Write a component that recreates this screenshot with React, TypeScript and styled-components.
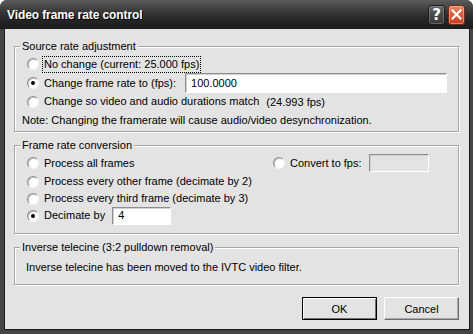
import React from "react";
import styled, { createGlobalStyle } from "styled-components";

const Global = createGlobalStyle`
  html, body { margin: 0; padding: 0; background: #ffffff; }
  body { font-family: "Liberation Sans", Arial, sans-serif; font-size: 11px; color: #000; }
  * { box-sizing: border-box; }
`;

const Window = styled.div`
  width: 473px;
  height: 334px;
  display: flex;
  flex-direction: column;
  background: #3a3a3a;
  border-radius: 7px 7px 0 0;
  overflow: hidden;
`;

const TitleBar = styled.div`
  height: 29px;
  flex: none;
  display: flex;
  align-items: center;
  padding: 0 8px 0 7px;
  background: linear-gradient(#5c5c5c 0%, #3c3c3c 35%, #242424 70%, #1c1c1c 100%);
`;

const Title = styled.div`
  flex: 1;
  color: #ffffff;
  font-family: "Liberation Sans", Arial, sans-serif;
  font-weight: bold;
  font-size: 12px;
  letter-spacing: -0.1px;
  text-shadow: 1px 1px 0 #000;
  padding-top: 1px;
`;

const CapButton = styled.div<{ $close?: boolean }>`
  width: 17px;
  height: 20px;
  margin-left: ${(p) => (p.$close ? "3px" : "0")};
  border-radius: 3px;
  border: 1px solid ${(p) => (p.$close ? "#7a2a18" : "#202020")};
  background: ${(p) =>
    p.$close
      ? "linear-gradient(#f08a66 0%, #e05a36 45%, #c8401e 100%)"
      : "linear-gradient(#6a6a6a 0%, #4a4a4a 50%, #383838 100%)"};
  box-shadow: inset 0 0 0 1px ${(p) => (p.$close ? "rgba(255,190,160,0.5)" : "rgba(160,160,160,0.4)")};
  display: flex;
  align-items: center;
  justify-content: center;
  color: #fff;
  font-family: "DejaVu Sans", Verdana, sans-serif;
  font-weight: bold;
  font-size: 15px;
`;

const Frame = styled.div`
  flex: 1;
  display: flex;
  padding: 0 3px 4px 4px;
  background: #454545;
`;

const Body = styled.div`
  flex: 1;
  background: #e3e3e3;
  border-left: 1px solid #1a1a1a;
  border-bottom: 1px solid #1a1a1a;
  border-right: 1px solid #1a1a1a;
  display: flex;
  flex-direction: column;
  padding: 11px 10px 0 9px;
`;

const Group = styled.fieldset<{ $gap?: number; $pb?: number; $pt?: number }>`
  margin: ${(p) => p.$gap ?? 0}px 0 0 0;
  padding: ${(p) => p.$pt ?? 2}px 11px ${(p) => p.$pb ?? 0}px 5px;
  border: 1px solid #a6a6a6;
  box-shadow: inset 1px 1px 0 #ffffff, 1px 1px 0 #ffffff;
  min-width: 0;
`;

const Legend = styled.legend`
  padding: 0 2px;
  line-height: 13px;
  height: 13px;
  background: #e3e3e3;
`;

const Row = styled.div<{ $h: number; $indent?: number }>`
  height: ${(p) => p.$h}px;
  display: flex;
  align-items: center;
  padding-left: ${(p) => p.$indent ?? 7}px;
  white-space: nowrap;
`;

const RadioCircle = styled.span<{ $on?: boolean }>`
  width: 12px;
  height: 12px;
  flex: none;
  border-radius: 50%;
  background: #ffffff;
  border: 1px solid;
  border-color: #8c8c8c #f4f4f4 #f4f4f4 #8c8c8c;
  box-shadow: inset 1px 1px 0 #c6c6c6;
  display: flex;
  align-items: center;
  justify-content: center;
  margin-right: 4px;
  &::after {
    content: "";
    width: 4px;
    height: 4px;
    border-radius: 50%;
    background: ${(p) => (p.$on ? "#000" : "transparent")};
  }
`;

const Label = styled.span<{ $focus?: boolean }>`
  padding: 1px 1px;
  line-height: 13px;
  outline: ${(p) => (p.$focus ? "1px dotted #000" : "none")};
`;

const TextBox = styled.div<{ $w?: number; $h: number; $disabled?: boolean; $grow?: boolean }>`
  ${(p) => (p.$grow ? "flex: 1;" : `width: ${p.$w}px;`)}
  height: ${(p) => p.$h}px;
  margin-left: ${(p) => (p.$grow ? 8 : 6)}px;
  background: ${(p) => (p.$disabled ? "#e3e3e3" : "#ffffff")};
  border: 1px solid;
  border-color: #8e8e8e #ffffff #ffffff #8e8e8e;
  box-shadow: inset 1px 1px 0 #d0d0d0;
  display: flex;
  align-items: center;
  padding-left: 5px;
  line-height: 13px;
`;

const Fps = styled.span`
  margin-left: 6px;
`;

const Conversion = styled.div`
  display: grid;
  grid-template-columns: 253px auto;
`;

const Column = styled.div`
  display: flex;
  flex-direction: column;
`;

const Buttons = styled.div`
  display: flex;
  justify-content: flex-end;
  gap: 7px;
  margin-top: 12px;
`;

const Button = styled.div<{ $default?: boolean }>`
  width: 75px;
  height: 23px;
  display: flex;
  align-items: center;
  justify-content: center;
  background: #e3e3e3;
  border: 1px solid;
  border-color: ${(p) => (p.$default ? "#000" : "#ffffff #6e6e6e #6e6e6e #ffffff")};
  box-shadow: ${(p) =>
    p.$default
      ? "inset 1px 1px 0 #ffffff, inset -1px -1px 0 #6e6e6e"
      : "inset -1px -1px 0 #a8a8a8"};
`;

function Radio({ on, children, focus }: { on?: boolean; children: React.ReactNode; focus?: boolean }) {
  return (
    <>
      <RadioCircle $on={on} />
      <Label $focus={focus}>{children}</Label>
    </>
  );
}

export default function App() {
  return (
    <>
      <Global />
      <Window>
        <TitleBar>
          <Title>Video frame rate control</Title>
          <CapButton>?</CapButton>
          <CapButton $close>
            <svg width="11" height="11" viewBox="0 0 11 11">
              <path d="M1.5 1.5 L9.5 9.5 M9.5 1.5 L1.5 9.5" stroke="#fff" strokeWidth="2.2" strokeLinecap="square" />
            </svg>
          </CapButton>
        </TitleBar>
        <Frame>
          <Body>
            <Group $pt={2} $pb={2}>
              <Legend>Source rate adjustment</Legend>
              <Row $h={18}>
                <Radio focus>No change (current: 25.000 fps)</Radio>
              </Row>
              <Row $h={20}>
                <Radio on>Change frame rate to (fps):</Radio>
                <TextBox $grow $h={20}>100.0000</TextBox>
              </Row>
              <Row $h={17}>
                <Radio>Change so video and audio durations match</Radio>
                <Fps>(24.993 fps)</Fps>
              </Row>
              <Row $h={19} $indent={2}>
                Note: Changing the framerate will cause audio/video desynchronization.
              </Row>
            </Group>
            <Group $gap={7} $pt={2} $pb={8}>
              <Legend>Frame rate conversion</Legend>
              <Conversion>
                <Column>
                  <Row $h={18}>
                    <Radio>Process all frames</Radio>
                  </Row>
                  <Row $h={19}>
                    <Radio>Process every other frame (decimate by 2)</Radio>
                  </Row>
                  <Row $h={15}>
                    <Radio>Process every third frame (decimate by 3)</Radio>
                  </Row>
                  <Row $h={19}>
                    <Radio on>Decimate by</Radio>
                    <TextBox $w={59} $h={18}>4</TextBox>
                  </Row>
                </Column>
                <Column>
                  <Row $h={18} $indent={0}>
                    <Radio>Convert to fps:</Radio>
                    <TextBox $w={60} $h={18} $disabled />
                  </Row>
                </Column>
              </Conversion>
            </Group>
            <Group $gap={7} $pt={4} $pb={8}>
              <Legend>Inverse telecine (3:2 pulldown removal)</Legend>
              <Row $h={18} $indent={6}>
                Inverse telecine has been moved to the IVTC video filter.
              </Row>
            </Group>
            <Buttons>
              <Button $default>OK</Button>
              <Button>Cancel</Button>
            </Buttons>
          </Body>
        </Frame>
      </Window>
    </>
  );
}
